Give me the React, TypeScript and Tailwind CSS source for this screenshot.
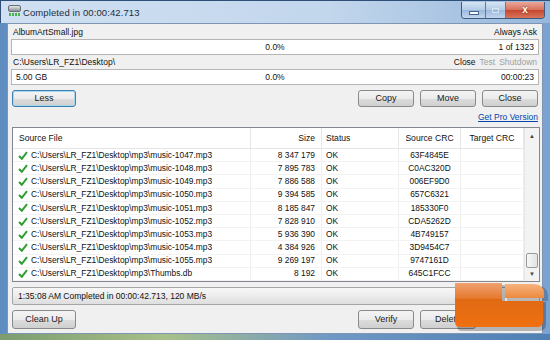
import React from "react";

const rows = [
  ["music-1047.mp3", "8 347 179", "63F4845E"],
  ["music-1048.mp3", "7 895 783", "C0AC320D"],
  ["music-1049.mp3", "7 886 588", "006EF9D0"],
  ["music-1050.mp3", "9 394 585", "657C6321"],
  ["music-1051.mp3", "8 185 847", "185330F0"],
  ["music-1052.mp3", "7 828 910", "CDA5262D"],
  ["music-1053.mp3", "5 936 390", "4B749157"],
  ["music-1054.mp3", "4 384 926", "3D9454C7"],
  ["music-1055.mp3", "9 269 197", "9747161D"],
  ["Thumbs.db", "8 192", "645C1FCC"],
];

const Btn = ({ label, focus = false, w = "w-[56px]", h = "h-[17px]" }: { label: string; focus?: boolean; w?: string; h?: string }) => (
  <div
    className={`${w} ${h} rounded-[3px] border flex items-center justify-center text-[9px] text-[#1a1a1a] bg-[linear-gradient(#f4f4f4,#ebebeb_50%,#dddddd_50%,#cfcfcf)] ${
      focus ? "border-[#3c7fb1] shadow-[inset_0_0_0_1px_#a8d8f0]" : "border-[#8a8a8a]"
    }`}
  >
    {label}
  </div>
);

const Check = () => (
  <svg width="10" height="9" viewBox="0 0 10 9" className="shrink-0">
    <path d="M1 5 L3.8 7.8 L9 1.2" fill="none" stroke="#2e9e32" strokeWidth="2" />
  </svg>
);

const App = () => {
  return (
    <div className="w-[550px] h-[340px] overflow-hidden relative flex flex-col bg-[linear-gradient(90deg,#5f8dc0,#8fb3db_40%,#7aa3d2)] font-['Liberation_Sans',Arial,sans-serif]">
      {/* Title bar */}
      <div className="h-[23px] shrink-0 flex items-start bg-[linear-gradient(90deg,#d0e0f2,#c2d6ec_60%,#96b7dc)] border-t border-l border-[#2d4f78]">
        <div className="mt-[4px] ml-[6px] w-[14px] h-[13px] flex flex-col items-center">
          <div className="w-[13px] h-[7px] rounded-[2px] bg-[linear-gradient(#e8e8e8,#8a8f95)] border border-[#6a6f75]" />
          <div className="flex gap-[1px] mt-[1px]">
            <div className="w-[2px] h-[3px] bg-[#4caf50]" />
            <div className="w-[2px] h-[3px] bg-[#4caf50]" />
            <div className="w-[2px] h-[3px] bg-[#4caf50]" />
            <div className="w-[2px] h-[3px] bg-[#4caf50]" />
          </div>
        </div>
        <div className="ml-[2px] mt-[5px] text-[9.5px] text-[#1e2d3d] tracking-[0.1px]">Completed in 00:00:42.713</div>
        <div className="ml-auto mr-[5px] mt-[1px] flex h-[17px] rounded-b-[4px] overflow-hidden border border-t-0 border-[#3c5a82]">
          <div className="w-[24px] flex items-center justify-center bg-[linear-gradient(#d6e4f3,#b3cbe6_50%,#9ab8dc_50%,#c2d6ee)] border-r border-[#5b7ba3]">
            <div className="w-[8px] h-[2px] bg-white border border-[#45648a] mt-[5px] box-content" />
          </div>
          <div className="w-[20px] flex items-center justify-center bg-[linear-gradient(#d6e4f3,#b3cbe6_50%,#9ab8dc_50%,#c2d6ee)] border-r border-[#5b7ba3]">
            <div className="w-[7px] h-[5px] border border-[#e9f0f8] opacity-70" />
          </div>
          <div className="w-[38px] flex items-center justify-center bg-[linear-gradient(#e9a79a,#d7705c_50%,#c4452c_50%,#d8755c)]">
            <span className="text-white font-bold text-[10px] leading-none [text-shadow:0_0_2px_#5a1a10]">x</span>
          </div>
        </div>
      </div>

      {/* Body */}
      <div className="flex-1 flex px-[7px] pb-[6px]">
        <div className="w-[536px] h-[311px] bg-[#f0f0f0] border border-[#7e95b3] px-[3px] flex flex-col text-[8.5px] text-[#111]">
          <div className="h-[15px] flex items-center justify-between px-[2px] pt-[2px]">
            <span>AlbumArtSmall.jpg</span>
            <span>Always Ask</span>
          </div>
          <div className="h-[16px] bg-white border border-[#b5b5b5] grid grid-cols-3 items-center px-[4px]">
            <span />
            <span className="text-center">0.0%</span>
            <span className="text-right">1 of 1323</span>
          </div>
          <div className="h-[14px] flex items-center justify-between px-[2px]">
            <span>C:\Users\LR_FZ1\Desktop\</span>
            <span className="flex gap-[4px]">
              <span>Close</span>
              <span className="text-[#a0a0a0]">Test</span>
              <span className="text-[#a0a0a0]">Shutdown</span>
            </span>
          </div>
          <div className="h-[16px] bg-white border border-[#b5b5b5] grid grid-cols-3 items-center px-[4px]">
            <span>5.00 GB</span>
            <span className="text-center">0.0%</span>
            <span className="text-right">00:00:23</span>
          </div>

          <div className="mt-[5px] flex items-center px-[1px]">
            <Btn label="Less" focus w="w-[64px]" />
            <div className="ml-auto flex gap-[6px]">
              <Btn label="Copy" />
              <Btn label="Move" />
              <Btn label="Close" />
            </div>
          </div>
          <div className="h-[20px] flex items-center justify-end pr-[1px]">
            <span className="text-[#0645ad] underline">Get Pro Version</span>
          </div>

          {/* File list */}
          <div className="ml-[1px] w-[528px] h-[155px] bg-white border border-[#828790] flex text-[8.4px]">
            <div className="flex-1 flex flex-col">
              <div className="h-[21px] shrink-0 flex items-center border-b border-[#e5e5e5] text-[8.6px]">
                <div className="w-[238px] pl-[6px] h-full flex items-center border-r border-[#e5e5e5]">Source File</div>
                <div className="w-[71px] pr-[6px] h-full flex items-center justify-end border-r border-[#e5e5e5]">Size</div>
                <div className="w-[77px] pl-[4px] h-full flex items-center border-r border-[#e5e5e5]">Status</div>
                <div className="w-[62px] h-full flex items-center justify-center border-r border-[#e5e5e5]">Source CRC</div>
                <div className="w-[63px] h-full flex items-center justify-center border-r border-[#e5e5e5]">Target CRC</div>
              </div>
              {rows.map(([name, size, crc]) => (
                <div key={name} className="h-[13.2px] shrink-0 flex items-center border-b border-[#f3f3f3]">
                  <div className="w-[238px] pl-[5px] h-full flex items-center gap-[3px] border-r border-[#efefef]">
                    <Check />
                    <span>C:\Users\LR_FZ1\Desktop\mp3\{name}</span>
                  </div>
                  <div className="w-[71px] pr-[6px] h-full flex items-center justify-end border-r border-[#efefef]">{size}</div>
                  <div className="w-[77px] pl-[4px] h-full flex items-center border-r border-[#efefef]">OK</div>
                  <div className="w-[62px] h-full flex items-center justify-center border-r border-[#efefef]">{crc}</div>
                  <div className="w-[63px] h-full border-r border-[#efefef]" />
                </div>
              ))}
            </div>
            {/* Scrollbar */}
            <div className="w-[15px] bg-[#f3f3f3] border-l border-[#e6e6e6] flex flex-col">
              <div className="h-[17px] flex items-center justify-center text-[6px] text-[#444]">▲</div>
              <div className="flex-1" />
              <div className="h-[15px] mx-[1px] rounded-[2px] border border-[#9a9a9a] bg-[linear-gradient(90deg,#f7f7f7,#e2e2e2)]" />
              <div className="h-[13px] flex items-center justify-center text-[6px] text-[#444]">▼</div>
            </div>
          </div>

          {/* Status bar */}
          <div className="mt-[5px] ml-[1px] w-[528px] h-[18px] rounded-[2px] border border-[#a5a5a5] bg-[linear-gradient(#f7f7f7,#ececec_50%,#dedede)] flex items-center pl-[5px]">
            1:35:08 AM Completed in 00:00:42.713, 120 MB/s
          </div>

          <div className="mt-[5px] flex items-center px-[1px]">
            <Btn label="Clean Up" w="w-[64px]" h="h-[19px]" />
            <div className="ml-[282px] flex gap-[6px]">
              <Btn label="Verify" h="h-[19px]" />
              <Btn label="Delete" h="h-[19px]" />
            </div>
          </div>
        </div>
      </div>

      {/* Bottom frame tint */}
      <div className="absolute left-0 bottom-0 w-full h-[6px] bg-[linear-gradient(90deg,#7d9c6e,#a8c08a_30%,#6f98c4_60%,#4f7fb4)]" />

      {/* Logo overlay */}
      <svg className="absolute left-[451px] top-[280px]" width="99" height="56" viewBox="0 0 99 56">
        <defs>
          <linearGradient id="lgMain" x1="0" y1="0" x2="0" y2="1">
            <stop offset="0" stopColor="#f0a070" />
            <stop offset="0.35" stopColor="#e57a2e" />
            <stop offset="0.36" stopColor="#e06a14" />
            <stop offset="1" stopColor="#f07010" />
          </linearGradient>
          <linearGradient id="lgSmall" x1="0" y1="0" x2="0" y2="1">
            <stop offset="0" stopColor="#f6b27c" />
            <stop offset="1" stopColor="#ec8a40" />
          </linearGradient>
        </defs>
        <path d="M6 5 H54 V22 H95 V44 Q95 51 88 51 H11 Q6 51 6 46 Z" fill="#000" opacity="0.25" />
        <path d="M56 6 H86 Q97 6 97 17 V21 H56 Z" fill="#000" opacity="0.2" />
        <path d="M4 3 H51 V21 H92 V41 Q92 47 86 47 H9 Q4 47 4 42 Z" fill="url(#lgMain)" />
        <path d="M54 4 H83 Q93 4 93 14 V18 H54 Z" fill="url(#lgSmall)" />
      </svg>
    </div>
  );
};

export default App;
